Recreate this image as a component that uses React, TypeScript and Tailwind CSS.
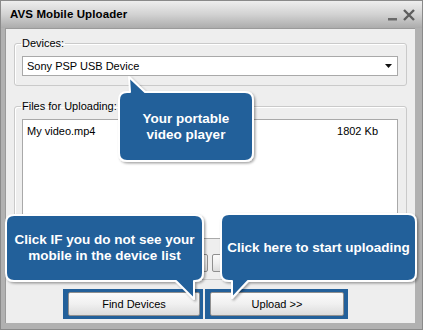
import React from "react";

const F = { fontFamily: '"Liberation Sans", Arial, sans-serif' };

function Callout({
  left,
  top,
  w,
  h,
  path,
  box,
  children,
}: {
  left: number;
  top: number;
  w: number;
  h: number;
  path: string;
  box: { x: number; y: number; w: number; h: number };
  children: React.ReactNode;
}) {
  return (
    <div className="absolute" style={{ left, top, width: w, height: h }}>
      <svg width={w} height={h} className="absolute left-0 top-0 overflow-visible">
        <defs>
          <filter id={`sh${left}`} x="-10%" y="-10%" width="130%" height="130%">
            <feDropShadow dx="1.5" dy="1.5" stdDeviation="1" floodColor="#000" floodOpacity="0.35" />
          </filter>
        </defs>
        <path d={path} fill="#23609a" stroke="#ffffff" strokeWidth="2" strokeLinejoin="round" filter={`url(#sh${left})`} />
      </svg>
      <div
        className="absolute flex flex-col items-center justify-center text-center text-white font-bold text-[13.5px] leading-[16px]"
        style={{ left: box.x, top: box.y, width: box.w, height: box.h, ...F }}
      >
        {children}
      </div>
    </div>
  );
}

function Btn({ children, className = "" }: { children?: React.ReactNode; className?: string }) {
  return (
    <div
      className={
        "flex items-center justify-center rounded-[2px] border border-[#8f8f8f] bg-gradient-to-b from-[#fbfbfb] via-[#f0f0f0] to-[#dcdcdc] text-[11px] text-black " +
        className
      }
      style={F}
    >
      {children}
    </div>
  );
}

export default function App() {
  return (
    <div className="relative w-[423px] h-[330px] overflow-hidden bg-[#b1b1b1] flex flex-col border border-[#8a8a8a]" style={F}>
      {/* Title bar */}
      <div className="h-[27px] shrink-0 flex items-center justify-between pl-[9px] pr-[7px] bg-gradient-to-b from-[#eeeeee] via-[#d2d2d2] to-[#acacac]">
        <span className="text-[11.5px] font-bold text-black tracking-[0.1px]">AVS Mobile Uploader</span>
        <div className="flex items-end gap-[5px] mt-[1px]">
          <svg width="10" height="12" viewBox="0 0 10 12">
            <rect x="0" y="9" width="9" height="2.5" fill="#6a6a6a" />
          </svg>
          <svg width="12" height="12" viewBox="0 0 12 12">
            <path d="M1 1 L11 11 M11 1 L1 11" stroke="#5e5e5e" strokeWidth="2.4" />
          </svg>
        </div>
      </div>

      {/* Body with side frames */}
      <div className="flex-1 pl-[4px] pr-[7px] pb-[6px] flex">
        <div className="flex-1 bg-[#eeeeee] border-l border-t border-[#9a9a9a] flex flex-col pl-[8px] pt-[7px]">
          {/* Devices */}
          <fieldset className="w-[393px] border border-[#cacaca] rounded-[3px] pl-[7px] pr-[8px] pt-[6px] pb-[9px] shadow-[inset_1px_1px_0_#ffffff]">
            <legend className="px-[1px] -ml-[1px] text-[11px] leading-[14px] text-black">Devices:</legend>
            <div className="h-[20px] bg-white border border-[#a9a9a9] flex items-center justify-between pl-[4px] pr-[5px]">
              <span className="text-[11px] text-black">Sony PSP USB Device</span>
              <svg width="7" height="4" viewBox="0 0 7 4">
                <path d="M0 0 L7 0 L3.5 4 Z" fill="#111" />
              </svg>
            </div>
          </fieldset>

          {/* Files */}
          <fieldset className="mt-[13px] w-[393px] h-[181px] border border-[#cacaca] rounded-[3px] pl-[7px] pr-[8px] pt-[6px] shadow-[inset_1px_1px_0_#ffffff] flex flex-col">
            <legend className="px-[1px] -ml-[1px] text-[11px] leading-[14px] text-black">Files for Uploading:</legend>
            <div className="h-[120px] bg-white border border-[#a9a9a9] pl-[4px] pr-[19px] pt-[3px] flex justify-between items-start">
              <span className="text-[11px] text-black">My video.mp4</span>
              <span className="text-[11px] text-black">1802 Kb</span>
            </div>
            <div className="mt-[15px] flex justify-center gap-[4px]">
              <Btn className="w-[78px] h-[18px]" />
              <Btn className="w-[78px] h-[18px]" />
            </div>
          </fieldset>

          {/* Bottom buttons */}
          <div className="mt-[9px] ml-[49px] flex gap-[2px]">
            <div className="bg-[#23609a] pl-[5px] pr-[3px] pt-[3px] pb-[3px]">
              <Btn className="w-[132px] h-[24px]">Find Devices</Btn>
            </div>
            <div className="bg-[#23609a] pl-[5px] pr-[4px] pt-[3px] pb-[3px]">
              <Btn className="w-[134px] h-[24px]">Upload &gt;&gt;</Btn>
            </div>
          </div>
        </div>
      </div>

      {/* Callouts */}
      <Callout
        left={113}
        top={72}
        w={146}
        h={94}
        path="M13,19 L16,19 L15,4 L31,19 L131,19 Q139,19 139,27 L139,80 Q139,88 131,88 L13,88 Q5,88 5,80 L5,27 Q5,19 13,19 Z"
        box={{ x: 5, y: 19, w: 134, h: 69 }}
      >
        <span>Your portable</span>
        <span>video player</span>
      </Callout>

      <Callout
        left={2}
        top={211}
        w={206}
        h={92}
        path="M11,3 L192,3 Q200,3 200,11 L200,61 Q200,69 192,69 L191,69 L191,87 L173,69 L11,69 Q3,69 3,61 L3,11 Q3,3 11,3 Z"
        box={{ x: 3, y: 3, w: 197, h: 66 }}
      >
        <span>Click IF you do not see your</span>
        <span>mobile in the device list</span>
      </Callout>

      <Callout
        left={217}
        top={210}
        w={204}
        h={92}
        path="M11,3 L190,3 Q198,3 198,11 L198,62 Q198,70 190,70 L30,70 L14,87 L14,70 L11,70 Q3,70 3,62 L3,11 Q3,3 11,3 Z"
        box={{ x: 3, y: 3, w: 195, h: 67 }}
      >
        <span>Click here to start uploading</span>
      </Callout>
    </div>
  );
}
